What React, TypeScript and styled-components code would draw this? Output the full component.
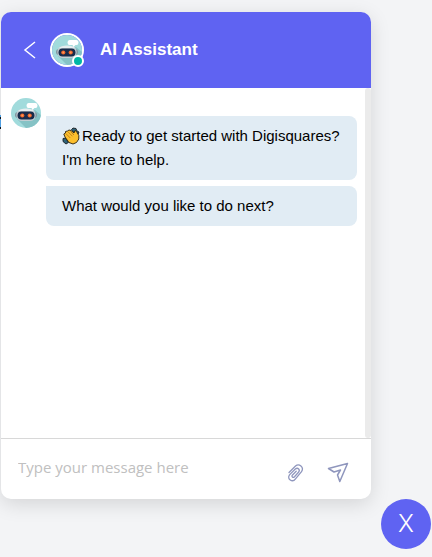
import React, { useState } from "react";
import styled, { createGlobalStyle } from "styled-components";

const GlobalStyle = createGlobalStyle`
  *, *::before, *::after { box-sizing: border-box; }
  body { margin: 0; background: #f3f4f6; font-family: "Liberation Sans", Arial, sans-serif; }
  button, input { font: inherit; border: 0; padding: 0; background: none; }
  button { cursor: pointer; }
`;

const Page = styled.main`
  position: relative;
  display: grid;
  grid-template-columns: minmax(0, 1fr) 50px;
  column-gap: 10px;
  min-height: 100vh;
  padding: 12px 1px 8px;
  overflow: hidden;
`;

const PageEdge = styled.svg`
  position: absolute;
  left: 0;
  top: 115px;
`;

const Panel = styled.section`
  display: flex;
  flex-direction: column;
  margin-bottom: 50px;
  border-radius: 10px;
  background: #fff;
  box-shadow: 0 5px 20px rgba(0, 0, 0, 0.13);
`;

const Header = styled.header`
  display: flex;
  align-items: center;
  height: 76px;
  padding: 0 20px;
  border-radius: 10px 10px 0 0;
  background: #5f63f2;
  color: #fff;
`;

const BackButton = styled.button`
  display: flex;
  width: 29px;
  padding-left: 2px;
  color: #fff;
`;

const AvatarWrap = styled.div`
  position: relative;
  display: flex;
  border: 2px solid #fff;
  border-radius: 50%;
`;

const OnlineDot = styled.span`
  position: absolute;
  right: -2px;
  bottom: -2px;
  width: 12px;
  height: 12px;
  border: 2px solid #fff;
  border-radius: 50%;
  background: #00b8a5;
`;

const Title = styled.h1`
  margin: 0 0 0 16px;
  font-size: 17px;
  line-height: 24px;
  font-weight: 700;
`;

const Body = styled.div`
  display: flex;
  flex: 1;
`;

const Conversation = styled.div`
  display: flex;
  align-items: flex-start;
  flex: 1;
  gap: 5px;
  padding: 10px 8px 10px 10px;
`;

const ScrollTrack = styled.div`
  width: 6px;
  border-radius: 4px;
  background: #ebebeb;
`;

const Messages = styled.div`
  display: flex;
  flex: 1;
  flex-direction: column;
  gap: 6px;
  padding-top: 18px;
`;

const Bubble = styled.p`
  margin: 0;
  padding: 8px 16px;
  border-radius: 0 8px 8px 8px;
  background: #e1ecf4;
  color: #000;
  font-size: 15px;
  line-height: 24px;
`;

const EmojiIcon = styled.svg`
  vertical-align: -4px;
`;

const Composer = styled.form`
  display: flex;
  align-items: center;
  height: 61px;
  padding: 0 21px 0 17px;
  border-top: 1px solid #d8d8d8;
`;

const MessageInput = styled.input`
  flex: 1;
  min-width: 0;
  height: 28px;
  padding-bottom: 4px;
  color: #333;
  font-family: "Open Sans", "Noto Sans", sans-serif;
  font-size: 15px;
  outline: none;
  &::placeholder { color: #c0c0c0; opacity: 1; }
`;

const Tools = styled.div`
  display: flex;
  align-items: center;
  gap: 20px;
  padding-top: 8px;
`;

const ToolButton = styled.button`
  display: flex;
  color: #8f96bd;
`;

const CloseButton = styled.button`
  align-self: end;
  width: 50px;
  height: 50px;
  border-radius: 50%;
  background: #5f63f2;
  color: #fff;
  font-family: Inter, sans-serif;
  font-size: 24px;
  line-height: 50px;
  font-weight: 300;
`;

function Robot({ id }: { id: string }) {
  return (
    <svg width="30" height="30" viewBox="0 0 30 30" aria-hidden="true">
      <defs>
        <clipPath id={id}><circle cx="15" cy="15" r="15" /></clipPath>
      </defs>
      <g clipPath={`url(#${id})`}>
        <rect width="30" height="30" fill="#a1dbdc" />
        <path d="M6 21L24 12L30 17V30H15Z" fill="#85c2c5" />
        <rect x="4" y="14" width="22" height="6" rx="3" fill="#82959f" />
        <rect x="5.500" y="11" width="19" height="12" rx="5.500" fill="#c3ced3" />
        <path d="M7 13Q9 10.500 15 10.500T23 13Z" fill="#e6eef0" />
        <rect x="6.500" y="13.500" width="17" height="8" rx="4" fill="#182c4b" />
        <circle cx="11.300" cy="17.500" r="2.100" fill="#ee642d" />
        <circle cx="18.700" cy="17.500" r="2.100" fill="#ee642d" />
        <circle cx="11.300" cy="17.500" r="0.900" fill="#ff9f55" />
        <circle cx="18.700" cy="17.500" r="0.900" fill="#ff9f55" />
        <path d="M17.500 5h7q2 0 2 2.500t-2 2.500h-1l-2 2-1-2h-3q-2 0-2-2.500t2-2.500Z" fill="#fff" />
      </g>
    </svg>
  );
}

function ClapIcon() {
  return (
    <EmojiIcon width="20" height="18" viewBox="0 0 20 18" role="img" aria-label="Clapping hands">
      <path d="M9.500 2.500L11 1l3 .5 1 2.500 2 1-1 2.500-5-2.500ZM1 11.500l2.500-.5 3 4.500-2.500 1.500-3-2.500Z" fill="#2f6379" stroke="#111" strokeWidth="0.800" />
      <path d="M3 10L1.800 7 3.500 6 3.500 4.500 5.500 4 7 3 9 3.500 12 6 13 3.500 14.500 4.500 16.800 8.500 16.800 12 14.500 15.500 11 17 7 15.500Z" fill="#fcbf2d" stroke="#2a210e" strokeWidth="0.900" strokeLinejoin="round" />
      <path d="M3.800 6.500l4.500 4.500M6 4.800l4.500 4.500M8.500 4.500l3.500 3.500" fill="none" stroke="#a86718" strokeWidth="0.700" />
    </EmojiIcon>
  );
}

export default function App() {
  const [message, setMessage] = useState("");
  return (
    <>
      <GlobalStyle />
      <Page>
        <PageEdge width="1" height="15" aria-hidden="true">
          <rect width="1" height="14" fill="#4f9fe2" />
          <rect y="2" width="1" height="2" fill="#101820" />
          <rect y="12" width="1" height="2" fill="#101820" />
        </PageEdge>
        <Panel aria-label="AI Assistant chat">
          <Header>
            <BackButton type="button" aria-label="Back">
              <svg width="14" height="18" viewBox="0 0 14 18" fill="none" stroke="currentColor" strokeWidth="1.500">
                <path d="M12 1L2 9L12 17" />
              </svg>
            </BackButton>
            <AvatarWrap>
              <Robot id="header-avatar" />
              <OnlineDot />
            </AvatarWrap>
            <Title>AI Assistant</Title>
          </Header>
          <Body>
            <Conversation>
              <Robot id="message-avatar" />
              <Messages>
                <Bubble><ClapIcon />Ready to get started with Digisquares? I'm here to help.</Bubble>
                <Bubble>What would you like to do next?</Bubble>
              </Messages>
            </Conversation>
            <ScrollTrack />
          </Body>
          <Composer onSubmit={(event) => event.preventDefault()}>
            <MessageInput
              type="text"
              aria-label="Message"
              placeholder="Type your message here"
              value={message}
              onChange={(event) => setMessage(event.target.value)}
            />
            <Tools>
              <ToolButton type="button" aria-label="Attach a file">
                <svg width="20" height="22" viewBox="0 0 20 22" fill="none" stroke="currentColor" strokeWidth="1.300" strokeLinecap="round">
                  <path d="M3 10.500L9.500 4C13 1 18.500 5 15.500 9.700L9.500 16.800C6.500 21 .5 17 3.500 12.800L9.300 7C12 5 14.500 8 12.500 10.200L8.500 14.700C7 16.200 5 14.500 6.500 13L10.200 9.200" />
                </svg>
              </ToolButton>
              <ToolButton type="submit" aria-label="Send">
                <svg width="24" height="22" viewBox="0 0 24 22" fill="none" stroke="currentColor" strokeWidth="1.500" strokeLinejoin="round">
                  <path d="M21.500 1.500L2.500 6.500L8 10L14.500 8L11.500 13L13.800 19.500Z" />
                </svg>
              </ToolButton>
            </Tools>
          </Composer>
        </Panel>
        <CloseButton type="button" aria-label="Close chat">X</CloseButton>
      </Page>
    </>
  );
}
